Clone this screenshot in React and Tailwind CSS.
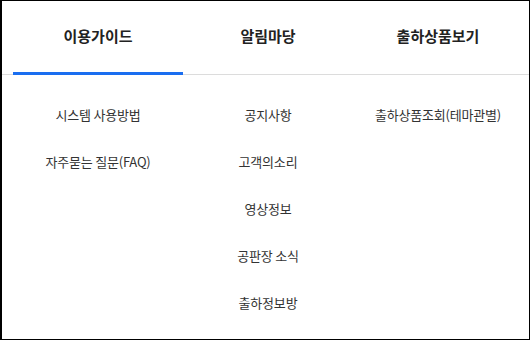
import React from 'react';

const menus = [
  { title: "이용가이드", items: ["시스템 사용방법", "자주묻는 질문(FAQ)"] },
  { title: "알림마당", items: ["공지사항", "고객의소리", "영상정보", "공판장 소식", "출하정보방"] },
  { title: "출하상품보기", items: ["출하상품조회(테마관별)"] },
];

const App = () => {
  const active = 0;

  return (
    <div className="w-[530px] h-[340px] bg-white border-l-2 border-t border-r border-b border-black font-['Noto_Sans_CJK_KR','Noto_Sans',sans-serif] text-[#222]">
      <div className="border-b border-[#dcdcdc]">
        <div className="flex pl-[11px]">
          {menus.map((menu, i) => (
            <div
              key={i}
              className={
                "w-[170px] h-[74px] flex items-center justify-center text-[15px] font-bold -mb-px border-b-[3px] " +
                (i === active ? "border-[#1a6ef0]" : "border-transparent")
              }
            >
              {menu.title}
            </div>
          ))}
        </div>
      </div>
      <div className="flex pl-[11px] pt-[16px]">
        {menus.map((menu, i) => (
          <ul key={i} className="w-[170px] flex flex-col items-center">
            {menu.items.map((item, idx) => (
              <li key={idx} className="h-[47px] flex items-center text-[13px] tracking-[-0.2px] text-[#333]">
                {item}
              </li>
            ))}
          </ul>
        ))}
      </div>
    </div>
  );
};

export default App;
